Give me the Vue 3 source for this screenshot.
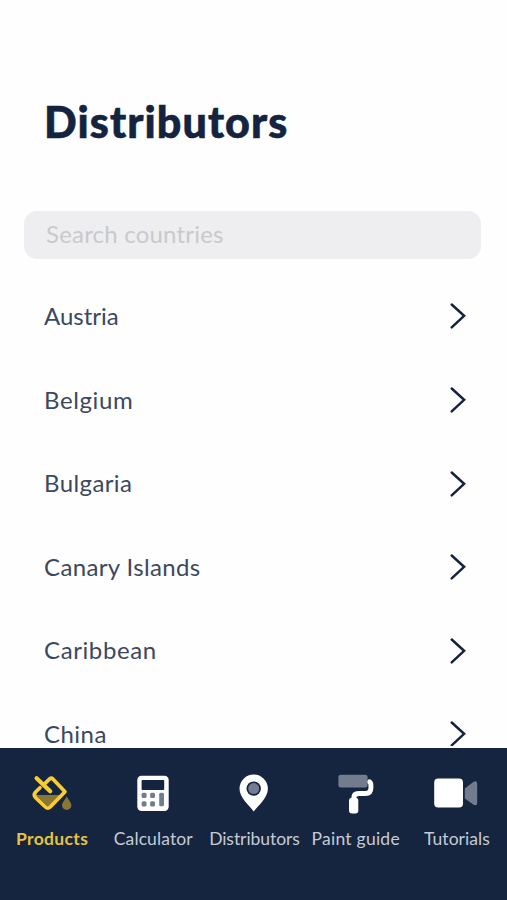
<script setup>
const countries = [
  { name: 'Austria', tracking: 0 },
  { name: 'Belgium', tracking: 0.6 },
  { name: 'Bulgaria', tracking: 0.4 },
  { name: 'Canary Islands', tracking: 0.36 },
  { name: 'Caribbean', tracking: 0.6 },
  { name: 'China', tracking: 0.45 },
]
const tabs = [
  { id: 'products', label: 'Products', tracking: 0.35 },
  { id: 'calculator', label: 'Calculator', tracking: 0.12 },
  { id: 'distributors', label: 'Distributors', tracking: -0.05 },
  { id: 'guide', label: 'Paint guide', tracking: 0.25 },
  { id: 'tutorials', label: 'Tutorials', tracking: 0.05 },
]
</script>

<template>
  <div class="screen">
    <main class="content">
      <h1 class="title">Distributors</h1>
      <div class="search"><span class="placeholder">Search countries</span></div>
      <ul class="list">
        <li v-for="c in countries" :key="c.name" class="row">
          <span class="name" :style="{ letterSpacing: c.tracking + 'px' }">{{ c.name }}</span>
          <svg class="chevron" width="20" height="28" viewBox="0 0 20 28">
            <path d="M4.7 2.5 17.1 13.8 4.7 25.3" fill="none" stroke="#14233e" stroke-width="2.5" stroke-linecap="round" stroke-linejoin="miter" />
          </svg>
        </li>
      </ul>
    </main>
    <nav class="tabs">
      <a v-for="t in tabs" :key="t.id" class="tab" :class="{ active: t.id === 'products' }">
        <svg class="icon" width="48" height="44" viewBox="0 0 48 44">
          <g v-if="t.id === 'products'">
            <path d="M7.5 24H34L20.5 36.5Z" fill="#887637" />
            <path d="M16.2 13.3 21.6 7.9Q23.3 6.6 24.9 8L37 20.8 22.2 36Q19.8 38.2 17.4 36L7.6 26.6Q5.1 23.8 7.6 21L12 16.7" fill="none" stroke="#f8cc35" stroke-width="3.7" stroke-linecap="round" stroke-linejoin="round" />
            <path d="M8.6 7.2 22.2 20.2" fill="none" stroke="#f8cc35" stroke-width="4.2" stroke-linecap="round" />
            <path d="M38.7 25.2C37.3 28.6 34 31.3 34 34.4a4.7 4.5 0 0 0 9.4 0C43.4 31.3 40.1 28.6 38.7 25.2Z" fill="#887637" />
          </g>
          <g v-else-if="t.id === 'calculator'">
            <rect x="8.3" y="4.8" width="31.4" height="35.2" rx="4.2" fill="#fff" />
            <rect x="12.6" y="9" width="22.6" height="10" rx="0.8" fill="#14233e" />
            <g fill="#727c8e">
              <rect x="12.6" y="21.8" width="4.9" height="5.2" rx="1.5" />
              <rect x="21.1" y="21.8" width="4.9" height="5.2" rx="1.5" />
              <rect x="12.6" y="30.2" width="4.9" height="5.2" rx="1.5" />
              <rect x="21.1" y="30.2" width="4.9" height="5.2" rx="1.5" />
              <rect x="30.2" y="21.8" width="4.8" height="13.5" rx="1.5" />
            </g>
          </g>
          <g v-else-if="t.id === 'distributors'">
            <path d="M23.7 40.5C19.8 35 9.5 26.8 9.5 17.8a14.2 14.2 0 0 1 28.4 0C37.9 26.8 27.8 35 23.7 40.5Z" fill="#fff" />
            <circle cx="23.7" cy="17.6" r="7.2" fill="#14233e" />
            <circle cx="23.7" cy="17.6" r="5.5" fill="#737d8f" />
          </g>
          <g v-else-if="t.id === 'guide'">
            <path d="M38.4 10.8Q39.9 11.5 39.9 14.5V17Q39.9 22.5 34.5 22.5H27.5Q22.7 22.5 22.7 27.5V30" fill="none" stroke="#fff" stroke-width="4.9" stroke-linecap="round" />
            <rect x="18" y="26.8" width="9.3" height="15.8" rx="3" fill="#fff" />
            <rect x="7.4" y="3.8" width="29.2" height="12.6" rx="2.5" fill="#727c8e" />
          </g>
          <g v-else>
            <rect x="2.2" y="7.6" width="28.8" height="29" rx="4" fill="#fff" />
            <path d="M32.8 17.5 41.3 10.9Q45.2 9.2 45.2 12.5V32Q45.2 35.4 41.3 33.6L32.8 27.5Z" fill="#727c8e" />
          </g>
        </svg>
        <span class="label" :style="{ letterSpacing: t.tracking + 'px' }">{{ t.label }}</span>
      </a>
    </nav>
  </div>
</template>

<style>
body { margin: 0; background: #fff; }
</style>
<style scoped>
.screen { width: 507px; height: 900px; display: flex; flex-direction: column; overflow: hidden; font-family: Lato, "Liberation Sans", sans-serif; background: #fefefe; color: #14233e; }
.content { height: 745.5px; flex: none; overflow: hidden; margin-bottom: 2px; box-sizing: border-box; padding: 94px 26px 0 24px; }
.title { margin: 0; padding-left: 20px; height: 116.5px; font-size: 43px; line-height: 56px; font-weight: 900; letter-spacing: 1.1px; white-space: nowrap; -webkit-text-stroke: 0.6px #14233e; }
.search { height: 48.5px; box-sizing: border-box; padding-left: 22px; border-radius: 13px; background: #eeeef0; display: flex; align-items: center; }
.placeholder { font-size: 24px; line-height: 30px; letter-spacing: 0.2px; padding-bottom: 1px; color: #c9c9cc; }
.list { list-style: none; margin: 15.7px 0 0; padding: 0; }
.row { height: 83.55px; padding: 0 14px 0 20px; display: flex; align-items: center; justify-content: space-between; font-size: 24px; color: #3c4860; white-space: nowrap; }
.name { line-height: 28px; padding-bottom: 1px; }
.chevron { flex: none; }
.tabs { flex: 1; display: flex; padding-left: 1px; background: #15253f; }
.tab { flex: 1 1 0; min-width: 0; display: flex; flex-direction: column; align-items: center; padding-top: 23px; color: #c5cbd5; }
.icon { flex: none; }
.label { margin-top: 12px; padding-left: 1px; font-size: 17.5px; line-height: 24px; white-space: nowrap; }
.active .label { color: #e8c23c; font-weight: 700; }
</style>
